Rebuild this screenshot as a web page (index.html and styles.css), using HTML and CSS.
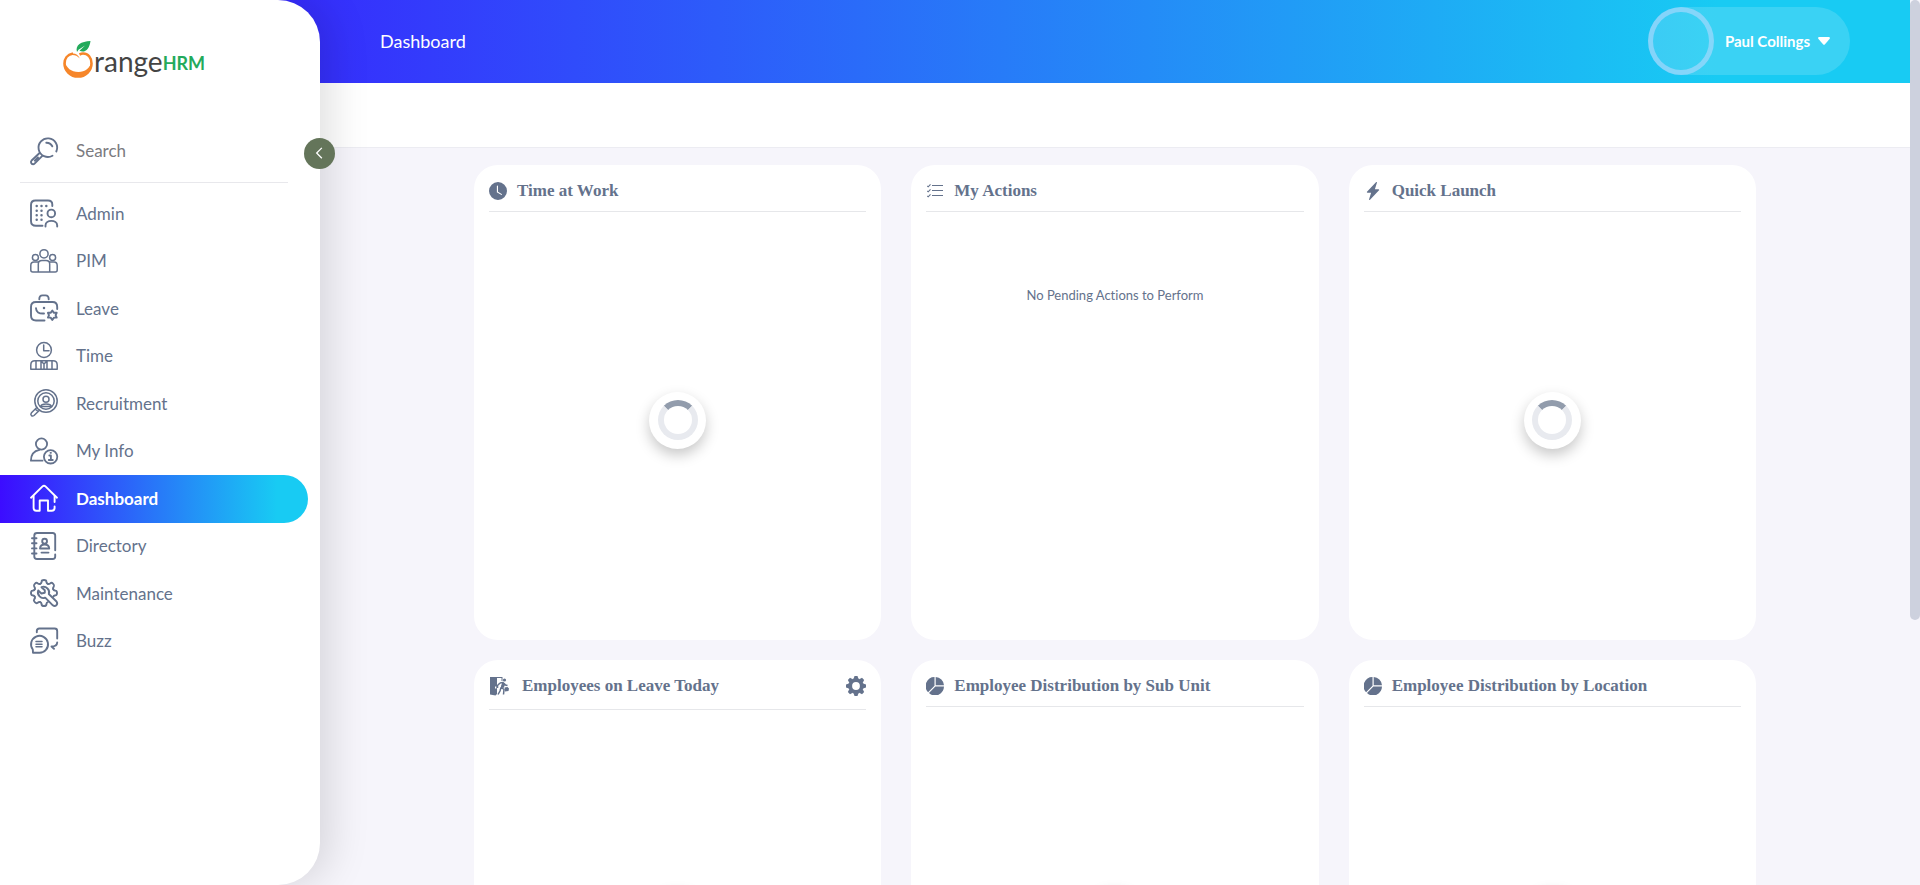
FILE: index.html
```html
<!DOCTYPE html>
<html lang="en">
<head>
<meta charset="utf-8">
<meta name="viewport" content="width=device-width, initial-scale=1">
<title>OrangeHRM</title>
<link rel="stylesheet" href="styles.css">
</head>
<body>
<div class="app">
  <aside class="sidebar">
    <a class="brand" href="#" aria-label="OrangeHRM">
      <svg class="brand-mark" viewBox="0 0 30 38" aria-hidden="true">
        <path d="M10 12.500C4 13.500 1.500 18 1.500 22.500A13.500 13 0 0 0 28.500 22.500C28.500 16.500 25 12.500 20 12.500C18.500 12.500 17.500 13 16.500 13.500" fill="none" stroke="#f6862a" stroke-width="2.600"/>
        <path d="M1.500 20C1 28 6 36 15 36C24 36 29 29 28.600 21C27 27 22 31 15.500 31C8 31 3.500 27 1.500 20Z" fill="#f6862a"/>
        <path d="M5 14.500C9 10.800 15 12.500 16.800 17.500C13.500 13.600 10 13.300 5 14.500Z" fill="#f6862a"/>
        <path d="M14 11C12 4 18 .5 27.500 0C26.500 8 22 12.500 16.500 9.800L22 4.500L15.500 8.800Z" fill="#23aa5b"/>
      </svg>
      <span class="brand-name">range</span><span class="brand-suffix">HRM</span>
    </a>

    <label class="search">
      <svg class="menu-icon" viewBox="0 0 28 28" aria-hidden="true">
        <path d="M22.500 18.700A9.300 9.300 0 1 1 26.300 14.500"/>
        <path d="M16.300 5.800C19 5.700 21 7 22.300 9.300"/>
        <path d="M9.300 16.200L1.600 23.500C.3 25 1.200 27.200 3 27.200C3.800 27.200 4.300 26.800 4.800 26.300L12.300 18.800M8 20.500L4.800 23.700"/>
      </svg>
      <input class="search-input" type="text" placeholder="Search" aria-label="Search">
    </label>
    <button class="collapse" type="button" aria-label="Collapse menu">
      <svg viewBox="0 0 16 16" aria-hidden="true"><path d="M10.500 2L5 7.500L10.500 13"/></svg>
    </button>

    <nav class="menu">
      <a class="menu-item" href="#">
        <svg class="menu-icon" viewBox="0 0 28 28" aria-hidden="true">
          <path d="M22.300 7V5.500Q22.300 1.500 18 1.500H5.500Q1 1.500 1 6V22Q1 26.800 6 26.800H12.500"/>
          <path d="M15.500 27.500V26.500C15.500 20.300 27.200 20.300 27.200 26.500V27.500"/>
          <circle cx="21.300" cy="14.400" r="3.800"/>
          <path class="dots" d="M6.700 7h.01M11.500 7h.01M16.300 7h.01M6.700 11.700h.01M11.500 11.700h.01M6.700 16.300h.01M11.500 16.300h.01M6.700 20.800h.01M11.500 20.800h.01"/>
        </svg>Admin</a>
      <a class="menu-item" href="#">
        <svg class="menu-icon thin" viewBox="0 0 28 28" aria-hidden="true">
          <circle cx="14" cy="6.800" r="4.100"/><circle cx="5.400" cy="10.500" r="3"/><circle cx="22.600" cy="10.500" r="3"/>
          <path d="M8.300 25V17Q8.300 13.500 12 13.500H16Q19.700 13.500 19.700 17V25M8.300 15H4Q.8 15 .8 18.500V23Q.8 25 2.800 25H25.200Q27.200 25 27.200 23V18.500Q27.200 15 24 15H19.700"/>
        </svg>PIM</a>
      <a class="menu-item" href="#">
        <svg class="menu-icon" viewBox="0 0 28 28" aria-hidden="true">
          <path d="M9.300 5.200Q9.300 1.400 12.500 1.400H15.500Q18.700 1.400 18.700 5.200"/>
          <path d="M27.200 15V13Q27.200 8 22.500 8H6Q1 8 1 13V21.500Q1 26.500 6 26.500H14.500"/>
          <path d="M6 14.300Q6.200 20 14 19.500"/><path class="dots" d="M14 14h.01"/>
          <path d="M22.300 16.600L24 18.800H26.700L25.600 21.200L26.700 23.600H24L22.300 25.900L20.600 23.600H17.900L19 21.200L17.900 18.800H20.600Z"/>
        </svg>Leave</a>
      <a class="menu-item" href="#">
        <svg class="menu-icon thin" viewBox="0 0 28 28" aria-hidden="true">
          <circle cx="14" cy="8" r="7.400"/><path d="M13.700 3V8.700H19"/>
          <path d="M.8 27.200V23Q.8 18.800 5 18.800H23Q27.200 18.800 27.200 23V27.200ZM6 19V27M11 19V27M17 19V27M22 19V27M11 19L14 22L17 19M14 22V27"/>
        </svg>Time</a>
      <a class="menu-item" href="#">
        <svg class="menu-icon thin" viewBox="0 0 28 28" aria-hidden="true">
          <circle cx="16" cy="12" r="11.200"/><circle cx="16" cy="12" r="8.200"/><circle cx="16" cy="10.300" r="3"/>
          <path d="M10.500 17.500C11.500 14.200 20.500 14.200 21.500 17.500Z"/>
          <path d="M6.800 18.500L1.500 23.800C-.2 25.800 2 28 4 26.500L9.500 21.200M5.800 20.500L8 22.500"/>
        </svg>Recruitment</a>
      <a class="menu-item" href="#">
        <svg class="menu-icon mid" viewBox="0 0 28 28" aria-hidden="true">
          <circle cx="11.500" cy="7" r="5.600"/>
          <path d="M12.500 23.700H.9C.9 17 4.500 13.700 9.500 12.800"/>
          <circle cx="20.600" cy="19.800" r="6.700"/>
          <path d="M19.300 18.500H20.900V23M18.800 23H22.800M20.500 15.800h.5"/>
        </svg>My Info</a>
      <a class="menu-item active" href="#" aria-current="page">
        <svg class="menu-icon" viewBox="0 0 28 28" aria-hidden="true">
          <path d="M1 13.700L12.500 2.400Q14 1 15.500 2.400L27 13.700"/>
          <path d="M3.600 12V24Q3.600 26.700 6.300 26.700H9.700V16.500H18V26.700H21.700Q24.600 26.700 24.600 24V22.500M24.600 12V18"/>
        </svg>Dashboard</a>
      <a class="menu-item" href="#">
        <svg class="menu-icon" viewBox="0 0 28 28" aria-hidden="true">
          <path d="M25.200 18.300V3.500Q25.200 1 22.700 1H7Q4.300 1 4.300 3.500V24.500Q4.300 27 7 27H22.700Q25.200 27 25.200 24.500V22.500"/>
          <path d="M2 6.200H6.500M2 11.300H6.500M2 16.400H6.500M2 21.500H6.500"/>
          <circle cx="14.600" cy="9.200" r="2.400"/><path d="M10 16.500Q10.200 12.500 14.600 12.500Q19 12.500 19.200 16.500ZM11.500 20.600H18.500"/>
        </svg>Directory</a>
      <a class="menu-item" href="#">
        <svg class="menu-icon" viewBox="-14 -14 28 28" aria-hidden="true">
          <defs><path id="tooth" d="M-3.800-9.200C-2.200-9.800-2.600-10.500-2.400-11.500Q-2.200-13 0-13Q2.200-13 2.400-11.500C2.600-10.500 2.200-9.800 3.800-9.200"/></defs>
          <use href="#tooth"/><use href="#tooth" transform="rotate(45)"/><use href="#tooth" transform="rotate(90)"/><use href="#tooth" transform="rotate(180)"/><use href="#tooth" transform="rotate(225)"/><use href="#tooth" transform="rotate(270)"/><use href="#tooth" transform="rotate(315)"/>
          <path d="M-2.500-5.800C2-7.500 6.500-3 4.800 1L12.500 8.500C14.500 11.300 11.300 14.300 8.800 12.300L1.200 4.600C-3 6.500-7.300 2-5.800-2.500L-2.600.5L.8-.2L.8-2.800Z"/>
        </svg>Maintenance</a>
      <a class="menu-item" href="#">
        <svg class="menu-icon" viewBox="0 0 28 28" aria-hidden="true">
          <path d="M6.800 5.300V4Q6.800 1.500 9.300 1.500H24.700Q27.200 1.500 27.200 4V11.500M27.200 15.500Q27 19.500 21.500 19.500L24 21.800"/>
          <path d="M3 25.800H9A8.500 8.500 0 1 0 2.800 22.500Z"/>
          <path d="M6 14.600H12M6 17.200H12M6 19.800H12" class="fine"/>
        </svg>Buzz</a>
    </nav>
  </aside>

  <div class="scroller">
    <header class="topbar">
      <h1 class="page-title">Dashboard</h1>
      <button class="user" type="button">
        <span class="avatar"></span>
        <span>Paul Collings</span>
        <svg class="caret" viewBox="0 0 12 8" aria-hidden="true"><path d="M1.200 0H10.800Q12.600.4 11.500 1.900L7 7.200Q6 8.200 5 7.200L.5 1.900Q-.6.4 1.200 0Z"/></svg>
      </button>
    </header>
    <div class="subbar"></div>

    <main class="content">
      <div class="grid">
        <section class="card">
          <h2 class="card-head"><svg class="card-icon" viewBox="0 0 16 16" aria-hidden="true"><path d="M16 8A8 8 0 1 1 0 8a8 8 0 0 1 16 0zM8 3.500a.5.5 0 0 0-1 0V9a.5.5 0 0 0 .252.434l3.500 2a.5.5 0 0 0 .496-.868L8 8.710V3.500z"/></svg>Time at Work</h2>
          <div class="card-body"><span class="loader" role="status" aria-label="Loading"><span class="ring"></span></span></div>
        </section>
        <section class="card">
          <h2 class="card-head"><svg class="card-icon" viewBox="0 0 18 18" aria-hidden="true"><path d="M6 3.500H17M6 8.500H17M6 13.500H17" fill="none" stroke="currentColor" stroke-width="1.200"/><path d="M1.300 4L2.200 4.800L4.500 2.300M1.300 9L2.200 9.800L4.500 7.300M1.300 14L2.200 14.800L4.500 12.300" fill="none" stroke="currentColor" stroke-width="1.100"/></svg>My Actions</h2>
          <p class="empty">No Pending Actions to Perform</p>
        </section>
        <section class="card">
          <h2 class="card-head"><svg class="card-icon" viewBox="0 0 16 16" aria-hidden="true"><path d="M11.251.068a.5.5 0 0 1 .227.580L9.677 6.500H13a.5.5 0 0 1 .364.843l-8 8.500a.5.5 0 0 1-.842-.490L6.323 9.500H3a.5.5 0 0 1-.364-.843l8-8.500a.5.5 0 0 1 .615-.090z"/></svg>Quick Launch</h2>
          <div class="card-body"><span class="loader" role="status" aria-label="Loading"><span class="ring"></span></span></div>
        </section>
        <section class="card">
          <div class="card-head tall">
            <svg class="leave-icon" viewBox="0 0 20 20" aria-hidden="true">
              <path d="M1 1H13.500V5H12.500V2H8V18L6.500 19.500L1 18.500Z"/>
              <circle cx="15.500" cy="4" r="1.600"/>
              <path d="M11 7L14 6.500L16.500 9L18.500 9.500M14 7L12.500 11.500L15 13.500L14.500 18.500M12 11.500L11 15L9 18.500M11 7L8.500 9.500V12" fill="none" stroke="currentColor" stroke-width="1.500"/>
              <path d="M13.500 6.500L16.500 8L14.500 12L11.800 11.500ZM15.500 11.500L18.500 11L20 12.500L19.500 15L16 15.500Z"/>
              <path d="M6 10.500H7.300V12.500H6Z" fill="#fff"/>
            </svg>
            <h2 class="card-title">Employees on Leave Today</h2>
            <button class="settings" type="button" aria-label="Configure">
              <svg viewBox="-10 -10 20 20" aria-hidden="true">
                <defs><path id="cog" d="M-2.500-7L-1.500-10H1.500L2.500-7Z"/></defs>
                <circle r="5.800" fill="none" stroke="currentColor" stroke-width="3.800"/>
                <use href="#cog"/><use href="#cog" transform="rotate(45)"/><use href="#cog" transform="rotate(90)"/><use href="#cog" transform="rotate(135)"/><use href="#cog" transform="rotate(180)"/><use href="#cog" transform="rotate(225)"/><use href="#cog" transform="rotate(270)"/><use href="#cog" transform="rotate(315)"/>
              </svg>
            </button>
          </div>
          <div class="card-body"><span class="loader" role="status" aria-label="Loading"><span class="ring"></span></span></div>
        </section>
        <section class="card">
          <h2 class="card-head"><svg class="card-icon" viewBox="0 0 18 18" aria-hidden="true"><path d="M8.500 0V8.800L2.100 15.200A9 9 0 0 1 8.500 0ZM9.700 0A9 9 0 0 1 18 8.300H9.700ZM18 9.600A9 9 0 0 1 3 16.100L9.400 9.600Z"/></svg>Employee Distribution by Sub Unit</h2>
          <div class="card-body"><span class="loader" role="status" aria-label="Loading"><span class="ring"></span></span></div>
        </section>
        <section class="card">
          <h2 class="card-head"><svg class="card-icon" viewBox="0 0 18 18" aria-hidden="true"><path d="M8.500 0V8.800L2.100 15.200A9 9 0 0 1 8.500 0ZM9.700 0A9 9 0 0 1 18 8.300H9.700ZM18 9.600A9 9 0 0 1 3 16.100L9.400 9.600Z"/></svg>Employee Distribution by Location</h2>
          <div class="card-body"><span class="loader" role="status" aria-label="Loading"><span class="ring"></span></span></div>
        </section>
      </div>
    </main>
  </div>
  <div class="scrollbar" aria-hidden="true"><div class="thumb"></div></div>
</div>
</body>
</html>
```

FILE: styles.css
```css
:root {
  --ink: #64728c;
  --sidebar: 320px;
  --brand-gradient: linear-gradient(90deg, #3c0cff 0%, #18cbf3 90%);
}

* { box-sizing: border-box; }

body {
  margin: 0;
  color: var(--ink);
  background: #f6f5fb;
  font-family: Lato, "Open Sans", sans-serif;
  font-variant-ligatures: none;
}

button, input { font: inherit; }
button { border: 0; cursor: pointer; }

.app {
  position: relative;
  display: grid;
  grid-template-columns: 1fr 10px;
  grid-template-rows: 100vh;
}

/* Sidebar */
.sidebar {
  position: absolute;
  inset: 0 auto 0 0;
  z-index: 2;
  width: var(--sidebar);
  background: #fff;
  border-radius: 0 42px 42px 0;
  box-shadow: 10px 0 40px rgba(0, 0, 0, 0.13);
}

.brand {
  display: flex;
  align-items: center;
  height: 120px;
  padding-left: 63px;
  text-decoration: none;
}

.brand-mark { width: 30px; height: 38px; }

.brand-name {
  margin-left: 1px;
  padding-top: 2px;
  color: #444;
  font-size: 28px;
  line-height: 40px;
}

.brand-suffix {
  padding-top: 5px;
  color: #23aa5b;
  font-size: 18px;
  font-weight: 700;
  line-height: 40px;
}

.search {
  display: flex;
  align-items: center;
  gap: 18px;
  height: 63px;
  margin: 0 32px 7px 20px;
  padding-left: 10px;
  border-bottom: 1px solid #e8e8ec;
}

.search-input {
  flex: 1;
  min-width: 0;
  padding: 0 0 2px;
  border: 0;
  outline: 0;
  color: var(--ink);
  background: none;
  font-size: 17px;
}

.search-input::placeholder { color: #7b7b80; }

.collapse {
  position: absolute;
  top: 138px;
  right: -15px;
  display: grid;
  place-items: center;
  width: 31px;
  height: 31px;
  padding: 0;
  border-radius: 50%;
  background: #64755a;
}

.collapse svg {
  width: 15px;
  height: 15px;
  fill: none;
  stroke: #fff;
  stroke-width: 1.400;
}

.menu {
  display: grid;
  grid-auto-rows: 1fr;
  height: 475px;
  margin-right: 12px;
}

.menu-item {
  display: flex;
  align-items: center;
  gap: 18px;
  padding: 0 0 1px 30px;
  border-radius: 0 24px 24px 0;
  color: var(--ink);
  font-size: 17px;
  text-decoration: none;
}

.menu-item.active {
  color: #fff;
  background: var(--brand-gradient);
  font-weight: 700;
}

.menu-icon {
  flex: none;
  width: 28px;
  height: 28px;
  overflow: visible;
  fill: none;
  stroke: var(--ink);
  stroke-width: 1.900;
  stroke-linecap: round;
  stroke-linejoin: round;
}

.active .menu-icon { stroke: #fff; }
.menu-icon.thin { stroke-width: 1.500; }
.menu-icon.mid { stroke-width: 1.800; }
.menu-icon .dots { stroke-width: 2.500; }
.menu-icon .fine { stroke-width: 1.500; }

/* Page */
.scroller {
  overflow-y: auto;
  scrollbar-width: none;
}

.scrollbar { background: #f6f5fb; }

.thumb {
  height: 70%;
  border-radius: 5px;
  background: #cdd1de;
}

.topbar {
  display: flex;
  align-items: center;
  justify-content: space-between;
  height: 83px;
  padding: 0 60px 2px calc(var(--sidebar) + 60px);
  color: #fff;
  background: var(--brand-gradient);
}

.page-title {
  margin: 0;
  font-size: 18px;
  font-weight: 400;
}

.user {
  display: flex;
  align-items: center;
  height: 68px;
  padding: 0 20px 0 0;
  border-radius: 34px;
  color: #fff;
  background: rgba(255, 255, 255, 0.15);
  font-size: 15px;
  font-weight: 700;
}

.avatar {
  width: 66px;
  height: 68px;
  margin-right: 11px;
  border: 5px solid rgba(205, 220, 255, 0.5);
  border-radius: 50%;
}

.caret {
  width: 12px;
  height: 8px;
  margin-left: 8px;
  fill: #fff;
}

.subbar {
  height: 65px;
  background: #fff;
  border-bottom: 1px solid #ececf2;
}

.content { padding: 17px 30px 126px calc(var(--sidebar) + 30px); }

.grid {
  display: grid;
  grid-template-columns: repeat(3, 1fr);
  grid-auto-rows: 475px;
  gap: 20px 30px;
  max-width: 1282px;
  margin: 0 auto;
}

.card {
  display: flex;
  flex-direction: column;
  padding: 16px 15px 12px;
  border-radius: 24px;
  background: #fff;
}

.card-head {
  display: flex;
  align-items: center;
  gap: 10px;
  margin: 0;
  padding-bottom: 10px;
  border-bottom: 1px solid #e6e7ea;
  font-family: "Liberation Serif", serif;
  font-size: 17px;
  font-weight: 700;
  line-height: 20px;
}

.card-head.tall { padding-bottom: 13px; }

.card-title {
  flex: 1;
  margin: 0;
  font-size: 17px;
}

.card-icon {
  width: 18px;
  height: 18px;
  fill: currentColor;
}

.leave-icon {
  width: 20px;
  height: 20px;
  margin-right: 3px;
  fill: currentColor;
}

.settings {
  display: grid;
  padding: 0;
  color: inherit;
  background: none;
}

.settings svg {
  width: 20px;
  height: 20px;
  fill: currentColor;
}

.card-body {
  flex: 1;
  display: grid;
  place-items: center;
}

.loader {
  display: grid;
  place-items: center;
  width: 57px;
  height: 57px;
  border-radius: 50%;
  background: #fff;
  box-shadow: 0 6px 14px rgba(0, 0, 0, 0.22);
}

.ring {
  width: 40px;
  height: 40px;
  border: 6px solid #e8eaef;
  border-top-color: #929cac;
  border-radius: 50%;
}

.empty {
  margin: 73px 0 0;
  font-size: 13px;
  line-height: 20px;
  text-align: center;
}
```
